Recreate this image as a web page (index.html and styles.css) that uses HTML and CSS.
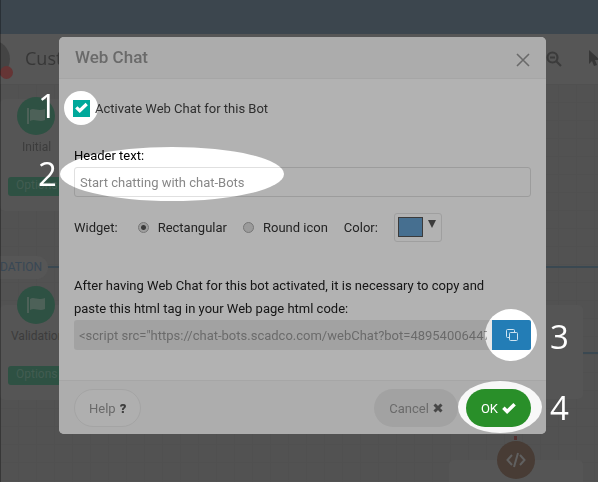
FILE: index.html
```html
<!DOCTYPE html>
<html lang="en">
<head>
<meta charset="utf-8">
<meta name="viewport" content="width=device-width, initial-scale=1">
<title>Web Chat</title>
<link rel="stylesheet" href="styles.css">
</head>
<body>
<svg class="symbols" aria-hidden="true">
  <symbol id="flag" viewBox="0 0 20 18"><path d="M1 1h2v16H1zM4 3c4-3 7 2 15-1v11c-6 3-10-2-15 1z"/></symbol>
  <symbol id="check" viewBox="0 0 12 10"><path d="M1.2 4.8 4.4 8 10.8 1.8" fill="none" stroke="currentColor" stroke-width="3"/></symbol>
</svg>

<div class="workspace" aria-hidden="true">
  <div class="topbar"></div>
  <div class="toolbar">
    <span class="avatar"></span><span class="alert"></span>
    <span class="project">Cust</span>
    <svg class="tool-zoom" viewBox="0 0 16 16"><circle cx="6.5" cy="6.5" r="5" fill="none" stroke="currentColor" stroke-width="2.2"/><path d="M4 6.5h5M10.5 10.5l4.5 4.5" stroke="currentColor" stroke-width="2"/></svg>
    <svg class="tool-pointer" viewBox="0 0 12 17"><path d="M1 0v14l3-3 2 5 3-1-2-5h5z" fill="currentColor"/></svg>
  </div>
  <div class="canvas">
    <div class="card card-initial"></div>
    <span class="node node-initial"><svg><use href="#flag"/></svg></span>
    <span class="caption caption-initial">Initial</span>
    <span class="options options-initial">Options</span>
    <div class="wire wire-main"></div>
    <span class="stage">DATION</span>
    <div class="card card-validation"></div>
    <span class="node node-validation"><svg><use href="#flag"/></svg></span>
    <span class="caption caption-validation">Validation</span>
    <span class="options options-validation">Options</span>
    <div class="card card-side"></div>
    <div class="wire wire-side"></div>
    <div class="card card-code"></div>
    <div class="link"></div>
    <span class="node node-code"><svg viewBox="0 0 20 16" fill="none" stroke="currentColor" stroke-width="2"><path d="M6 3 1.500 8 6 13M14 3l4.500 5-4.500 5M12 1 8 15"/></svg></span>
  </div>
</div>

<main class="dialog" role="dialog" aria-labelledby="title">
  <header class="dialog-header">
    <h1 id="title">Web Chat</h1>
    <button class="close" type="button" aria-label="Close"><svg viewBox="0 0 14 14"><path d="M1 1l12 12M13 1 1 13" stroke="currentColor" stroke-width="1.600"/></svg></button>
  </header>
  <form class="dialog-body">
    <label class="activate"><span class="tick"><input type="checkbox" checked><svg><use href="#check"/></svg></span>Activate Web Chat for this Bot</label>
    <label class="field-label" for="header-text">Header text:</label>
    <input class="text-field" id="header-text" type="text" value="Start chatting with chat-Bots">
    <div class="widget-row">
      <span class="widget-title">Widget:</span>
      <label class="choice"><input type="radio" name="widget" checked>Rectangular</label>
      <label class="choice"><input type="radio" name="widget">Round icon</label>
      <label for="color">Color:</label>
      <button class="color" id="color" type="button"><span class="swatch"></span><span class="arrow"></span></button>
    </div>
    <label class="note" for="tag">After having Web Chat for this bot activated, it is necessary to copy and paste this html tag in your Web page html code:</label>
    <div class="copy-row">
      <input class="tag" id="tag" type="text" readonly value="&lt;script src=&quot;https://chat-bots.scadco.com/webChat?bot=4895400644720&quot;&gt;">
      <button class="copy" type="button" aria-label="Copy"><svg viewBox="0 0 12 12" fill="none" stroke="currentColor"><rect x="3.500" y="3.500" width="8" height="8" rx="1"/><path d="M3 8.500H1.500a1 1 0 0 1-1-1v-6a1 1 0 0 1 1-1h6a1 1 0 0 1 1 1V3"/></svg></button>
    </div>
  </form>
  <footer class="dialog-footer">
    <button class="pill help" type="button">Help <b>?</b></button>
    <button class="pill cancel" type="button">Cancel <svg viewBox="0 0 10 10"><path d="M1.500 1.500l7 7M8.500 1.500l-7 7" stroke="currentColor" stroke-width="3"/></svg></button>
    <button class="pill ok" type="button">OK <svg class="ok-check"><use href="#check"/></svg></button>
  </footer>
</main>

<svg class="tour">
  <mask id="spots">
    <rect width="100%" height="100%" fill="#fff"/>
    <circle cx="81" cy="108" r="17"/>
    <ellipse cx="172" cy="174" rx="112" ry="27"/>
    <circle cx="511" cy="335" r="26"/>
    <ellipse cx="500" cy="407" rx="42" ry="26"/>
  </mask>
  <rect width="100%" height="100%" fill="#000" fill-opacity=".3" mask="url(#spots)"/>
  <g class="steps">
    <text x="38" y="118">1</text>
    <text x="38" y="186">2</text>
    <text x="550" y="349">3</text>
    <text x="550" y="420">4</text>
  </g>
</svg>
</body>
</html>
```
FILE: styles.css
```css
* { box-sizing: border-box; }
body {
  margin: 0;
  min-height: 100vh;
  overflow: hidden;
  padding: 37px 52px 48px 59px;
  font: 13px/23px Roboto, sans-serif;
  color: #444;
}
button, input { font: inherit; color: inherit; margin: 0; }
.symbols { position: absolute; width: 0; height: 0; }

/* dimmed workspace behind the dialog */
.workspace {
  position: fixed;
  inset: 0;
  display: flex;
  flex-direction: column;
  color: #5c5c5c;
  background: #777;
}
.workspace::after { content: ""; position: absolute; inset: 0 auto 0 0; width: 1px; background: rgba(0, 0, 0, .3); }
.topbar { height: 34px; background: #566570; }
.toolbar { position: relative; height: 50px; background: #7b7b7b; }
.avatar { position: absolute; left: -28px; top: 6px; width: 38px; height: 38px; border-radius: 50%; background: #626262; }
.alert { position: absolute; left: 0; top: 32px; width: 13px; height: 13px; border-radius: 50%; background: #914c4c; }
.project { position: absolute; left: 25px; top: 13px; font: 18px/23px "Open Sans", sans-serif; color: #4f4f4f; }
.tool-zoom { position: absolute; left: 546px; top: 17px; width: 16px; height: 16px; color: #555; }
.tool-pointer { position: absolute; left: 588px; top: 16px; width: 12px; height: 17px; color: #505050; }
.canvas {
  position: relative;
  flex: 1;
  background-color: #767676;
  background-image: linear-gradient(#737373 1px, transparent 1px), linear-gradient(90deg, #737373 1px, transparent 1px);
  background-size: 18px 18px;
}
.canvas > * { position: absolute; }
.card { background: #7a7a7a; border-radius: 5px; }
.card-initial { left: 0; top: 15px; width: 90px; height: 112px; }
.card-validation { left: 0; top: 221px; width: 90px; height: 95px; }
.card-side { left: 449px; top: 221px; width: 134px; height: 94px; }
.card-code { left: 449px; top: 376px; width: 134px; height: 60px; }
.node {
  display: grid;
  place-items: center;
  width: 38px;
  height: 38px;
  border-radius: 50%;
  background: #437460;
  color: #8a8a8a;
}
.node svg { width: 20px; height: 18px; fill: #6f8b7f; }
.node-initial { left: 17px; top: 13px; }
.node-validation { left: 17px; top: 202px; }
.node-code { left: 497px; top: 357px; background: #67564c; }
.node-code svg { fill: none; }
.caption { font-size: 12px; line-height: 16px; color: #575757; }
.caption-initial { left: 22px; top: 55px; }
.caption-validation { left: 11px; top: 244px; }
.options { left: 8px; width: 80px; height: 19px; padding-left: 8px; border-radius: 3px; background: #437460; color: #5f8575; font-size: 12px; line-height: 17px; }
.options-initial { top: 93px; }
.options-validation { top: 282px; }
.wire { height: 2px; background: #536775; }
.wire-main { left: 0; right: 0; top: 182px; }
.wire-side { left: 583px; right: 0; top: 268px; }
.stage { left: 0; top: 172px; width: 48px; background: #7b7b7b; color: #52677a; font-size: 12px; border-radius: 0 12px 12px 0; }
.link { left: 514px; top: 345px; width: 3px; height: 12px; background: repeating-linear-gradient(#744 0 4px, transparent 4px 7px); }

/* dialog */
.dialog { position: relative; border-radius: 5px; background: #fff; overflow: hidden; }
.dialog-header {
  display: flex;
  align-items: center;
  justify-content: space-between;
  height: 42px;
  padding: 0 16px;
  background: #f6f6f6;
  border-bottom: 1px solid #eee;
}
h1 { margin: 0; font-size: 17px; font-weight: 500; color: #999; }
.close { display: flex; padding: 4px 0 0; border: 0; background: none; color: #999; }
.close svg { width: 14px; height: 14px; }
.dialog-body { padding: 18px 15px 30px; }
.activate { display: flex; align-items: center; gap: 5px; height: 23px; }
.tick { position: relative; display: flex; margin-left: -1px; }
.tick input { appearance: none; width: 17px; height: 17px; background: #00a99b; }
.tick svg { position: absolute; left: 2px; top: 2px; width: 13px; height: 11px; color: #fff; }
.field-label { display: block; margin-top: 24px; color: #000; }
.text-field {
  display: block;
  width: 100%;
  height: 30px;
  padding: 0 5px;
  border: 1px solid #e0e0e0;
  border-radius: 3px;
  background: #fff;
  color: #888;
}
.widget-row { display: flex; align-items: center; margin-top: 16px; gap: 16px; color: #333; }
.widget-title { margin-right: 4px; }
.choice { display: flex; align-items: center; gap: 9px; }
.choice input {
  appearance: none;
  width: 11px;
  height: 11px;
  border: 1px solid #aaa;
  border-radius: 50%;
  background: #dedede;
}
.choice input:checked { background: radial-gradient(circle, #555 0 2px, #e2e2e2 3px); }
.color {
  display: flex;
  gap: 5px;
  width: 48px;
  height: 29px;
  padding: 3px;
  border: 1px solid #e4e4e4;
  border-radius: 3px;
  background: #fff;
}
.swatch { width: 25px; height: 20px; border: 1px solid #555; background: #65a0ce; }
.arrow { margin-top: 3px; border: 4px solid transparent; border-top: 8px solid #555; border-bottom: 0; }
.note { display: block; margin-top: 32px; padding-right: 24px; color: #222; }
.copy-row { display: flex; }
.tag {
  flex: 1;
  min-width: 0;
  height: 30px;
  padding: 0 5px;
  border: 0;
  border-radius: 3px 0 0 3px;
  background: #e9e9e9;
  color: #999;
}
.copy { display: grid; place-items: center; width: 39px; height: 30px; padding: 0; border: 0; border-radius: 0 2px 2px 0; background: #237db6; color: #cfe4f1; }
.copy svg { width: 12px; height: 12px; }
.dialog-footer {
  display: flex;
  gap: 8px;
  padding: 8px 15px 7px;
  border-top: 1px solid #eee;
  background: #f8f8f8;
}
.pill {
  display: flex;
  align-items: center;
  justify-content: center;
  gap: 4px;
  height: 38px;
  padding: 0 14px;
  border: 1px solid transparent;
  border-radius: 19px;
}
.pill svg { width: 10px; height: 10px; }
.help { margin-right: auto; border-color: #ebebeb; background: #fbfbfb; color: #999; }
.help b { color: #555; font-weight: 900; }
.cancel { background: #e8e8e8; color: #999; }
.cancel svg { color: #666; }
.ok { background: #298f29; color: #fff; }
.pill .ok-check { width: 14px; height: 12px; }

/* guided tour layer */
.tour { position: fixed; inset: 0; width: 100%; height: 100%; pointer-events: none; }
.steps { font: 33px "Open Sans", sans-serif; fill: #fff; }
```
